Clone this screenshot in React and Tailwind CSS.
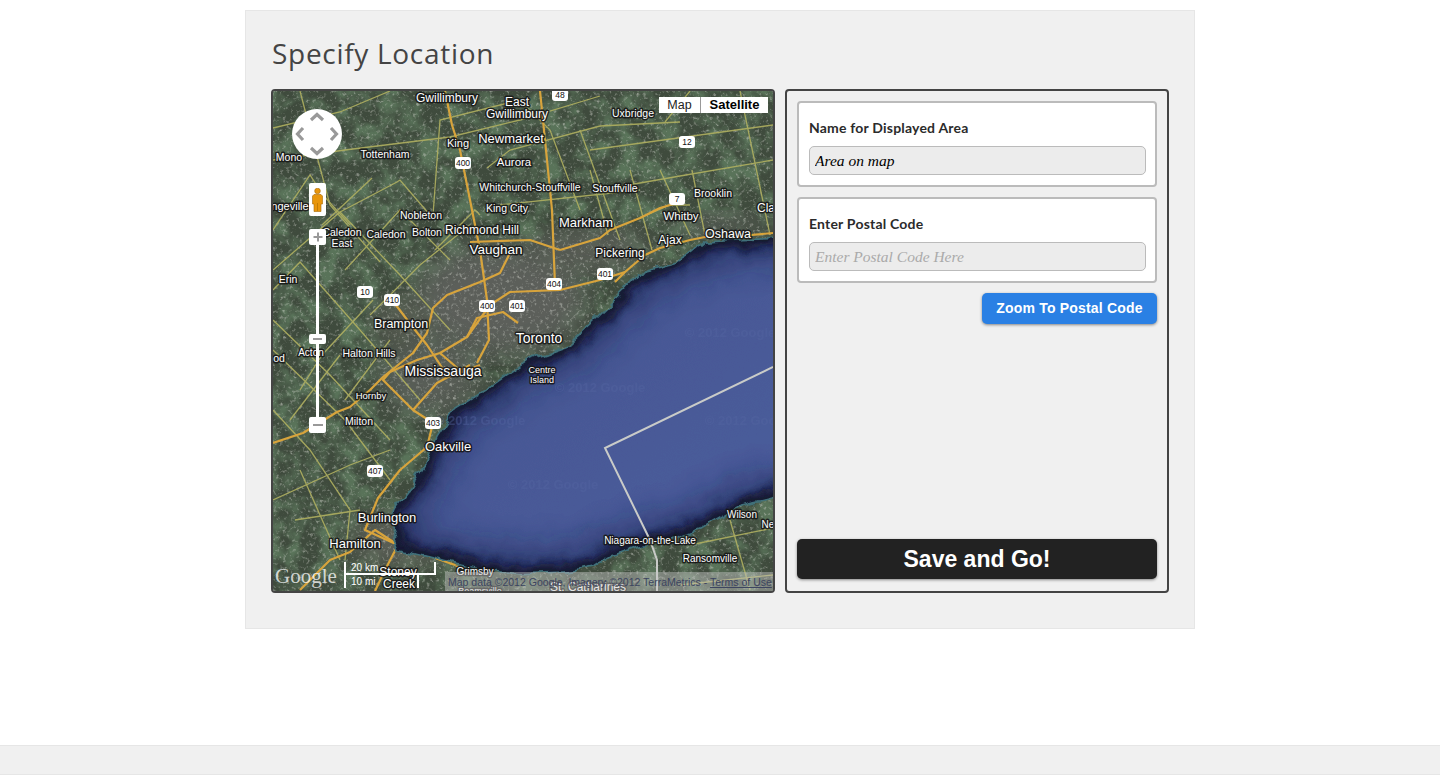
import React from "react";

const majorRoads = [
  "445,91 452,125 460,150 470,200 480,250 487,300 489,340 477,363",
  "773,233 740,236 705,237 690,240 660,248 645,255 625,272 615,282",
  "560,250 600,238 610,230 640,218 660,208 680,202",
  "625,272 600,280 560,290 510,292 490,305 467,337 440,353 417,360 390,372 383,380 413,410 433,423 427,447 400,470 378,498 365,530 398,545 455,565 475,575",
  "510,253 500,273 480,282 447,295 433,308 427,333 413,353 383,377 370,390 350,407 337,412 303,433 273,443",
  "467,337 477,318 503,312 518,323",
  "413,410 437,383 470,365",
  "398,545 385,570 375,591",
  "398,545 375,530 350,552 330,560 300,590",
  "540,91 546,150 552,210 555,285",
  "470,242 530,240 560,250",
  "440,353 462,372 480,365",
  "392,300 415,330 427,345 445,372",
];

const minorRoads = [
  "273,128 340,112 390,91", "273,160 345,150 450,137 520,120 600,96", "300,91 318,160 330,205 380,262",
  "273,230 310,175 323,195 350,225", "273,270 340,212 400,275 450,330", "273,290 300,262 360,330 420,400",
  "273,320 330,375 390,440", "273,350 345,420 390,480", "273,410 310,450 350,510 345,560",
  "340,212 397,182 400,180 430,215", "345,270 400,210 450,260", "370,315 420,265 470,225", "322,225 372,178",
  "373,300 322,355 300,390", "340,355 290,420", "390,340 345,400", "435,250 475,210 480,215",
  "487,168 510,150 600,126 680,122", "433,215 440,120 520,100", "520,100 550,130 580,210", "580,130 620,240",
  "590,170 608,235", "630,170 652,250", "660,170 690,235", "692,170 705,235", "600,190 680,176 773,160", "590,150 773,125",
  "640,218 670,205 690,205", "740,91 770,235", "665,122 690,91", "500,205 640,190", "273,500 350,465 390,450",
  "300,470 340,560", "295,520 360,510", "690,545 773,528", "680,585 773,575", "730,520 750,590",
];

const labels = [
  ["Gwillimbury", 447, 102, 12], ["East", 517, 106, 12], ["Gwillimbury", 517, 118, 12], ["Uxbridge", 633, 117, 10.5],
  ["King", 458, 147, 11], ["Newmarket", 511, 143, 13], ["Tottenham", 385, 158, 10.5], ["Mono", 289, 161, 10.5],
  ["Aurora", 514, 166, 11.5], ["Whitchurch-Stouffville", 530, 191, 10.5], ["Stouffville", 615, 192, 10.5], ["Brooklin", 713, 197, 10.5],
  ["Nobleton", 421, 219, 10.5], ["King City", 507, 212, 10.5], ["Whitby", 681, 220, 11.5], ["Markham", 586, 227, 13],
  ["Ajax", 670, 244, 12], ["Oshawa", 728, 238, 12.5], ["Cla", 766, 212, 12], ["Caledon", 342, 236, 10.5], ["East", 342, 247, 10.5],
  ["Caledon", 386, 238, 10.5], ["Bolton", 427, 236, 10.5], ["Richmond Hill", 482, 234, 12], ["Vaughan", 496, 254, 13.5],
  ["Pickering", 620, 257, 12], ["ngeville", 290, 210, 11], ["Erin", 288, 283, 10.5], ["Brampton", 401, 328, 12.5],
  ["Halton Hills", 369, 357, 10.5], ["Acton", 311, 356, 10], ["od", 279, 362, 10.5], ["Mississauga", 443, 376, 14],
  ["Toronto", 539, 343, 14], ["Centre", 542, 373, 9], ["Island", 542, 383, 9], ["Hornby", 371, 399, 9.5],
  ["Milton", 359, 425, 10.5], ["Oakville", 448, 451, 13], ["Burlington", 387, 522, 13], ["Hamilton", 355, 548, 13],
  ["Grimsby", 475, 575, 10], ["Niagara-on-the-Lake", 650, 544, 10], ["Ransomville", 710, 562, 10], ["Wilson", 742, 518, 10],
  ["Ne", 768, 528, 10], ["St. Catharines", 588, 591, 12], ["Beamsville", 480, 594, 9], ["Stoney", 398, 576, 12], ["Creek", 399, 588, 12],
];

const shields = [
  [463, 163, "400"], [687, 142, "12"], [677, 199, "7"], [605, 274, "401"], [554, 284, "404"], [517, 306, "401"],
  [487, 306, "400"], [392, 300, "410"], [365, 292, "10"], [433, 423, "403"], [375, 471, "407"], [560, 95, "48"],
];

const watermarks = [[730, 337], [600, 392], [480, 425], [553, 489], [750, 425]];

const shoreLine =
  "M800,238 L735,241 L705,243 L693,253 L677,263 L643,272 L627,290 L593,323 L567,347 L530,360 L490,388 L455,410 L437,437 L425,465 L410,490 L395,510 L390,523 L400,548 L440,558 L480,568 L520,572 L570,570 L595,565 L610,555 L640,545 L670,538 L700,528 L740,505 L800,490";
const shore = `${shoreLine} Z`;

const MapDrawing = () => (
  <svg viewBox="273 91 500 500" className="block w-[500px] h-[500px]">
    <defs>
      <filter id="speckle" x="0" y="0" width="100%" height="100%">
        <feTurbulence type="fractalNoise" baseFrequency="0.3" numOctaves="3" seed="7" />
        <feColorMatrix values="0 0 0 0 0.66  0 0 0 0 0.67  0 0 0 0 0.62  3.2 0 0 0 -1.75" />
      </filter>
      <filter id="patches" x="0" y="0" width="100%" height="100%">
        <feTurbulence type="fractalNoise" baseFrequency="0.05" numOctaves="4" seed="3" />
        <feColorMatrix values="0 0 0 0 0.1  0 0 0 0 0.17  0 0 0 0 0.1  3 0 0 0 -1.15" />
      </filter>
      <filter id="blur12"><feGaussianBlur stdDeviation="14" /></filter>
      <filter id="wideShadow" filterUnits="userSpaceOnUse" x="240" y="60" width="580" height="560">
        <feGaussianBlur stdDeviation="16" />
      </filter>
      <filter id="nearShadow" filterUnits="userSpaceOnUse" x="240" y="60" width="580" height="560">
        <feGaussianBlur stdDeviation="5" />
      </filter>
      <filter id="wobble" filterUnits="userSpaceOnUse" x="240" y="60" width="580" height="560">
        <feTurbulence type="fractalNoise" baseFrequency="0.05" numOctaves="3" seed="11" result="noise" />
        <feDisplacementMap in="SourceGraphic" in2="noise" scale="12" xChannelSelector="R" yChannelSelector="G" />
      </filter>
      <linearGradient id="water" x1="0" y1="0" x2="1" y2="1">
        <stop offset="0" stopColor="#44558f" />
        <stop offset="1" stopColor="#4b5d9d" />
      </linearGradient>
      <clipPath id="lakeClip"><path d={shore} /></clipPath>
    </defs>
    <rect x="273" y="91" width="500" height="500" fill="#3f4b3d" />
    <rect x="273" y="91" width="500" height="500" filter="url(#patches)" />
    <ellipse cx="500" cy="300" rx="85" ry="55" fill="#5c5f5a" filter="url(#blur12)" />
    <ellipse cx="430" cy="375" rx="50" ry="40" fill="#595d56" filter="url(#blur12)" />
    <ellipse cx="590" cy="250" rx="60" ry="22" fill="#585c55" filter="url(#blur12)" />
    <ellipse cx="720" cy="225" rx="50" ry="12" fill="#575c54" filter="url(#blur12)" />
    <ellipse cx="400" cy="540" rx="50" ry="26" fill="#5b5f57" filter="url(#blur12)" />
    <ellipse cx="400" cy="320" rx="28" ry="24" fill="#545950" filter="url(#blur12)" />
    <rect x="273" y="91" width="500" height="500" filter="url(#speckle)" opacity="0.5" />

    <g fill="none" stroke="#b0b060" strokeWidth="1.3" opacity="0.9">
      {minorRoads.map((points) => <polyline key={points} points={points} />)}
    </g>
    <g fill="none" stroke="#d8a43c" strokeWidth="2.2" strokeLinejoin="round">
      {majorRoads.map((points) => <polyline key={points} points={points} />)}
    </g>

    {/* lake, dark along the shore and fading toward the middle */}
    <g filter="url(#wobble)">
      <path d={shore} fill="url(#water)" stroke="#3f7079" strokeWidth="3.5" strokeLinejoin="round" />
      <g clipPath="url(#lakeClip)">
        <path d={shoreLine} fill="none" stroke="#141a48" strokeWidth="40" filter="url(#wideShadow)" opacity="0.6" />
        <path d={shoreLine} fill="none" stroke="#080b22" strokeWidth="14" filter="url(#nearShadow)" opacity="0.85" />
      </g>
    </g>
    <polyline points="773,367 605,448 650,540 657,560 657,591" fill="none" stroke="#c9cbc8" strokeWidth="2" />

    <g fontFamily="'Liberation Sans', Arial, sans-serif" fontSize="13" fontWeight="bold" fill="#5566a2" opacity="0.4">
      {watermarks.map(([x, y]) => <text key={x} x={x} y={y} textAnchor="middle">© 2012 Google</text>)}
    </g>

    {shields.map(([x, y, name]) => (
      <g key={name + x}>
        <rect x={x - 8} y={y - 6} width="16" height="12" rx="3" fill="#fff" />
        <text x={x} y={y + 3} textAnchor="middle" fontFamily="'Liberation Sans', Arial, sans-serif" fontSize="8.5" fill="#111">{name}</text>
      </g>
    ))}
    <g fontFamily="'Liberation Sans', Arial, sans-serif" textAnchor="middle" fill="#fff" stroke="#151515" strokeOpacity="0.85" strokeWidth="3" strokeLinejoin="round" paintOrder="stroke">
      {labels.map(([name, x, y, size]) => <text key={name + x + y} x={x} y={y} fontSize={size}>{name}</text>)}
    </g>
  </svg>
);

const PanControl = () => (
  <svg viewBox="0 0 50 50" className="absolute left-[19px] top-[18px] w-[50px] h-[50px]">
    <circle cx="25" cy="25" r="25" fill="#fff" />
    <g fill="none" stroke="#999" strokeWidth="3.2">
      <path d="M19 11 L25 5.5 L31 11" />
      <path d="M19 39 L25 44.5 L31 39" />
      <path d="M11 19 L5.5 25 L11 31" />
      <path d="M39 19 L44.5 25 L39 31" />
    </g>
  </svg>
);

const Pegman = () => (
  <div className="absolute left-[36px] top-[92px] w-[17px] h-[33px] bg-white rounded-[2px] flex items-center justify-center">
    <svg viewBox="0 0 11 24" className="w-[11px] h-[24px]">
      <circle cx="5.5" cy="3" r="2.8" fill="#e8960c" stroke="#a86a05" strokeWidth="0.6" />
      <path d="M2 6.5 H9 L10.5 8 V16 H9 V23.5 H2 V16 H0.5 V8 Z" fill="#e8960c" stroke="#a86a05" strokeWidth="0.6" />
      <path d="M5.5 15 V23" stroke="#a86a05" strokeWidth="0.6" />
    </svg>
  </div>
);

const ZoomControl = () => (
  <>
    <div className="absolute left-[43px] top-[154px] w-[3px] h-[174px] bg-white" />
    <div className="absolute left-[36px] top-[138px] w-[17px] h-[16px] bg-white rounded-[2px] flex items-center justify-center">
      <svg viewBox="0 0 10 10" className="w-[10px] h-[10px]"><path d="M5 0.5 V9.5 M0.5 5 H9.5" stroke="#999" strokeWidth="2" /></svg>
    </div>
    <div className="absolute left-[36px] top-[243px] w-[17px] h-[10px] bg-white rounded-[2px] flex items-center justify-center">
      <div className="w-[9px] h-[2px] bg-[#999]" />
    </div>
    <div className="absolute left-[36px] top-[326px] w-[17px] h-[16px] bg-white rounded-[2px] flex items-center justify-center">
      <div className="w-[10px] h-[2px] bg-[#999]" />
    </div>
  </>
);

const MapTypeSwitch = () => (
  <div className="absolute left-[386px] top-[6px] flex h-[16px] w-[109px] bg-white font-['Liberation_Sans',Arial,sans-serif] leading-[16px] text-[#222]">
    <div className="w-[42px] text-center text-[12.5px] border-r border-[#999]">Map</div>
    <div className="flex-1 text-center text-[13px] font-bold text-black">Satellite</div>
  </div>
);

const MapFooter = () => (
  <>
    <div className="absolute left-[172px] bottom-0 right-0 h-[19px] bg-[#c8c8c8]/45 pl-[3px] pt-[4px] whitespace-nowrap font-['Liberation_Sans',Arial,sans-serif] text-[10.5px] leading-[12px] text-[#3d4560]">
      Map data ©2012 Google, Imagery ©2012 TerraMetrics - <span className="underline">Terms of Use</span>
    </div>
    <div className="absolute left-[2px] top-[472px] font-['Liberation_Serif',serif] text-[21px] leading-[26px] text-white/75">Google</div>
    <div className="absolute left-[71px] top-[471px] w-[92px] font-['Liberation_Sans',Arial,sans-serif] text-[10px] text-white">
      <div className="w-[92px] h-[13px] border-x-2 border-b-2 border-white pl-[5px] leading-[11px]">20 km</div>
      <div className="w-[75px] h-[13px] border-x-2 border-white pl-[5px] leading-[13px]">10 mi</div>
    </div>
  </>
);

const FieldCard = ({ label, value, placeholder }) => (
  <div className="h-[86px] bg-white border-2 border-[#bbb] rounded-[4px] pl-[10px] pr-[9px] pt-[16px]">
    <label className="block h-[27px] font-['Lato',sans-serif] font-bold text-[14px] leading-[18px] text-[#2b2b2b] tracking-[0.2px]">{label}</label>
    <input
      readOnly
      value={value}
      placeholder={placeholder}
      className="block w-full h-[29px] px-[5px] pt-[1px] bg-[#ececec] border border-[#bbb] rounded-[5px] font-['Liberation_Serif',serif] italic text-[15.5px] text-black placeholder:text-[#aaa] outline-none"
    />
  </div>
);

export default function App() {
  return (
    <div className="min-h-[775px] flex flex-col bg-white">
      <div className="w-[950px] h-[619px] mx-auto mt-[10px] bg-[#f0f0f0] border border-[#e6e6e6] px-[25px] pt-[23px]">
        <h1 className="h-[55px] pl-[1px] font-['Open_Sans',sans-serif] text-[28px] tracking-[0.7px] leading-[38px] text-[#444]">Specify Location</h1>

        <div className="flex gap-[10px]">
          {/* map */}
          <div className="relative w-[504px] h-[504px] border-2 border-[#444] rounded-[4px] overflow-hidden">
            <MapDrawing />
            <PanControl />
            <Pegman />
            <ZoomControl />
            <MapTypeSwitch />
            <MapFooter />
          </div>

          {/* form */}
          <div className="w-[384px] h-[504px] border-2 border-[#444] rounded-[4px] p-[10px] pb-[12px] flex flex-col gap-[10px]">
            <FieldCard label="Name for Displayed Area" value="Area on map" />
            <FieldCard label="Enter Postal Code" value="" placeholder="Enter Postal Code Here" />
            <div className="flex justify-end">
              <button className="w-[175px] h-[31px] bg-[#2a80e4] rounded-[5px] shadow-[0_1px_3px_rgba(0,0,0,0.45)] font-['Liberation_Sans',Arial,sans-serif] font-bold text-[14px] tracking-[0.2px] text-white">
                Zoom To Postal Code
              </button>
            </div>
            <button className="mt-auto h-[40px] bg-[#222] rounded-[5px] shadow-[0_1px_3px_rgba(0,0,0,0.45)] font-['Liberation_Sans',Arial,sans-serif] font-bold text-[23px] text-white">
              Save and Go!
            </button>
          </div>
        </div>
      </div>

      <div className="mt-auto h-[30px] bg-[#f0f0f0] border-t border-b border-[#e6e6e6]" />
    </div>
  );
}
